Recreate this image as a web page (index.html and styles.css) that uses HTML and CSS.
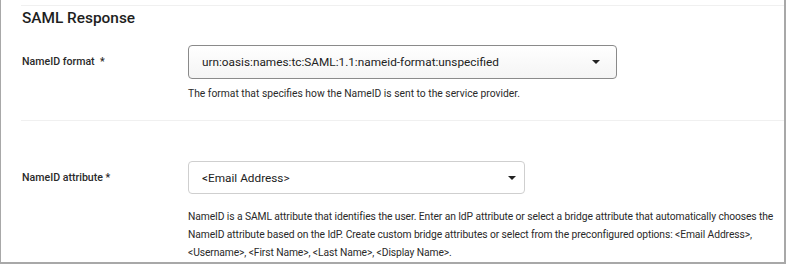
FILE: index.html
```html
<!DOCTYPE html>
<html lang="en">
<head>
    <meta charset="UTF-8">
    <title>SAML Response</title>
    <link rel="stylesheet" href="styles.css">
</head>
<body>
    <div class="panel">
        <h2>SAML Response</h2>

        <div class="field">
            <label for="nameidFormat">NameID format &nbsp;*</label>
            <div class="control">
                <div class="select select-wide" id="nameidFormat">
                    <span>urn:oasis:names:tc:SAML:1.1:nameid-format:unspecified</span>
                    <span class="caret"></span>
                </div>
                <p class="help">The format that specifies how the NameID is sent to the service provider.</p>
            </div>
        </div>

        <div class="field field-second">
            <label for="nameidAttr">NameID attribute *</label>
            <div class="control">
                <div class="select select-narrow" id="nameidAttr">
                    <span>&lt;Email Address&gt;</span>
                    <span class="caret"></span>
                </div>
                <p class="help help-long">NameID is a SAML attribute that identifies the user. Enter an IdP attribute or select a bridge attribute that automatically chooses the NameID attribute based on the IdP. Create custom bridge attributes or select from the preconfigured options: &lt;Email Address&gt;, &lt;Username&gt;, &lt;First Name&gt;, &lt;Last Name&gt;, &lt;Display Name&gt;.</p>
            </div>
        </div>
    </div>
</body>
</html>
```

FILE: styles.css
```css
body {
    margin: 0;
    font-family: 'Roboto', 'Noto Sans', sans-serif;
    color: #222;
    background-color: #fff;
}

.panel {
    width: 786px;
    height: 264px;
    border-left: 1px solid #a8a8a8;
    border-right: 2px solid #a8a8a8;
    border-bottom: 2px solid #a8a8a8;
    padding: 5px 0 0 0;
    box-sizing: border-box;
    overflow: hidden;
}

h2 {
    margin: 0 0 0 20px;
    padding: 2px 0 0 1px;
    border-top: 1px solid #f0f0f0;
    font-size: 15.4px;
    font-weight: 500;
    line-height: 20px;
    color: #1e1e1e;
}

.field {
    display: flex;
    padding: 17px 0 0 21px;
}

.field-second {
    margin-left: 20px;
    margin-top: 17px;
    padding: 40px 0 0 1px;
    border-top: 1px solid #f0f0f0;
}

label {
    width: 166px;
    flex-shrink: 0;
    font-size: 10.6px;
    font-weight: 500;
    line-height: 13px;
    color: #2a2a2a;
    padding-top: 10px;
}

.control {
    flex: 1;
}

.select {
    display: flex;
    align-items: center;
    justify-content: space-between;
    box-sizing: border-box;
    height: 34px;
    padding: 0 16px 0 13px;
    border-radius: 4px;
    font-size: 11.8px;
    color: #222;
}

.select-wide {
    width: 429px;
    border: 1px solid #8a8a8a;
    background: linear-gradient(#ffffff, #f4f4f4);
}

.select-narrow {
    width: 337px;
    height: 33px;
    padding-right: 8px;
    border: 1px solid #cfcfcf;
    background-color: #fff;
}

.caret {
    width: 0;
    height: 0;
    border-left: 4px solid transparent;
    border-right: 4px solid transparent;
    border-top: 4px solid #222;
}

.help {
    margin: 6px 0 0 0;
    font-size: 10.3px;
    line-height: 18px;
    color: #2a2a2a;
}

.help-long {
    margin-top: 14px;
    padding-right: 6px;
    letter-spacing: -0.1px;
}
```
